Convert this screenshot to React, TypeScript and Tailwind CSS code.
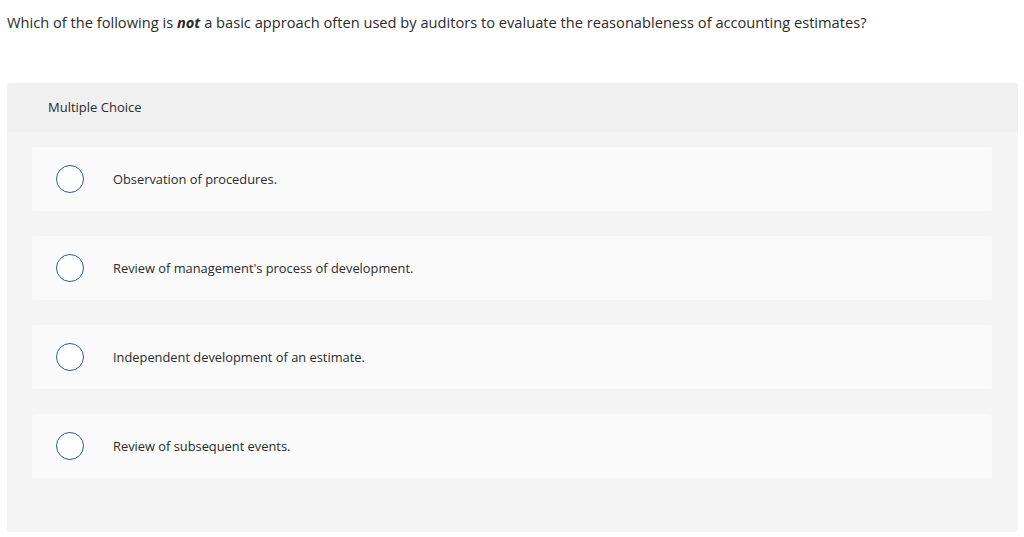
import React from "react";

const options = [
  "Observation of procedures.",
  "Review of management's process of development.",
  "Independent development of an estimate.",
  "Review of subsequent events.",
];

export default function App() {
  return (
    <div className="w-[1024px] h-[537px] bg-white text-[#2b2b2b]" style={{ fontFamily: "'Open Sans', Lato, sans-serif" }}>
      <div className="pt-[13px] pl-[7px] text-[14.65px] leading-[18px] text-[#2b2b2b]">
        Which of the following is <b><i>not</i></b> a basic approach often used by auditors to evaluate the reasonableness of accounting estimates?
      </div>
      <div className="mt-[52px] ml-[7px] w-[1011px] rounded-[3px] bg-[#f4f4f4] overflow-hidden">
        <div className="h-[49px] bg-[#f0f0f0] flex items-center pl-[41px] pt-[1px] text-[13px] text-[#2b2b2b]">
          Multiple Choice
        </div>
        <div className="pt-[15px] pb-[54px] pl-[25px] pr-[26px] flex flex-col gap-[25px]">
          {options.map((o) => (
            <div key={o} className="h-[64px] bg-[#fafafa] rounded-[3px] flex items-center pl-[24px]">
              <div className="w-[28px] h-[28px] rounded-full border-[1.5px] border-[#2c5f94] bg-white shrink-0" />
              <div className="ml-[29px] pt-[1px] text-[12.85px] text-[#2b2b2b]">{o}</div>
            </div>
          ))}
        </div>
      </div>
    </div>
  );
}
